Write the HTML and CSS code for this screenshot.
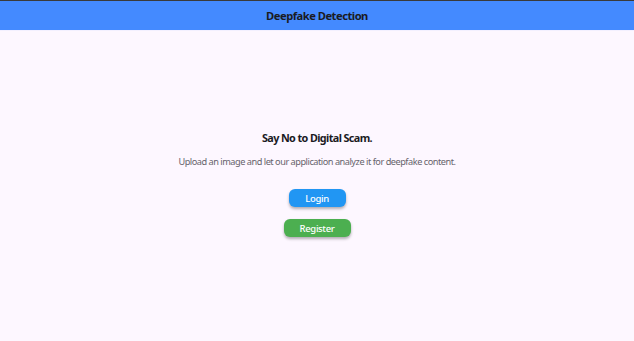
FILE: index.html
```html
<!DOCTYPE html>
<html lang="en">
<head>
<meta charset="utf-8">
<title>Deepfake Detection</title>
<link rel="stylesheet" href="styles.css">
</head>
<body>
<div class="app">
  <header class="appbar">
    <h1 class="appbar-title">Deepfake Detection</h1>
  </header>
  <main class="content">
    <h2 class="headline">Say No to Digital Scam.</h2>
    <p class="subtitle">Upload an image and let our application analyze it for deepfake content.</p>
    <div class="actions">
      <button class="btn btn-login">Login</button>
      <button class="btn btn-register">Register</button>
    </div>
  </main>
</div>
</body>
</html>
```
FILE: styles.css
```css
* { box-sizing: border-box; }
html, body { margin: 0; padding: 0; height: 100%; }
body {
  background: #fdf7ff;
  font-family: "Noto Sans", "DejaVu Sans", sans-serif;
}
.app {
  height: 100%;
  display: flex;
  flex-direction: column;
}
.appbar {
  border-top: 1px solid #3a3a3a;
  background: #448aff;
  height: 31px;
  display: flex;
  align-items: center;
  justify-content: center;
  border-bottom: 1px solid #f3f0ff;
}
.appbar-title {
  margin: 0;
  font-size: 11.2px;
  font-weight: 700;
  letter-spacing: -0.5px;
  color: #1b1b1f;
}
.content {
  flex: 1;
  display: flex;
  flex-direction: column;
  align-items: center;
  padding-top: 98px;
}
.headline {
  margin: 0;
  font-size: 10.8px;
  font-weight: 700;
  letter-spacing: -0.6px;
  color: #1b1b1f;
  line-height: 18px;
}
.subtitle {
  margin: 8px 0 0;
  font-size: 9.2px;
  letter-spacing: -0.48px;
  color: #66636b;
  line-height: 14px;
}
.actions {
  margin-top: 20px;
  display: flex;
  flex-direction: column;
  align-items: center;
  gap: 12px;
}
.btn {
  border: none;
  border-radius: 6px;
  color: #fff;
  font-family: inherit;
  font-size: 9.5px;
  font-weight: 500;
  letter-spacing: -0.35px;
  height: 18px;
  padding: 0;
  box-shadow: 0 2px 3px rgba(0,0,0,0.3);
}
.btn-login { background: #2196f3; width: 57px; }
.btn-register { background: #4caf50; width: 67px; }
```
